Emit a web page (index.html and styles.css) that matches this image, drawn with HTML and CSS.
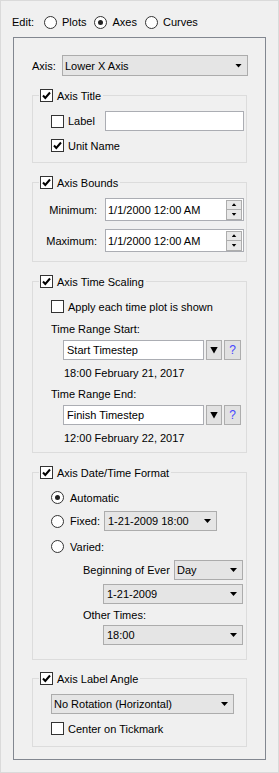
FILE: index.html
```html
<!DOCTYPE html>
<html>
  <head>
    <title>Axis Options</title>
    <link rel="stylesheet" href="styles.css">
  </head>
  <body>
    <div class="edit-row">
      <span class="edit-label">Edit:</span>
      <span class="radio"></span><span class="opt">Plots</span>
      <span class="radio on"></span><span class="opt">Axes</span>
      <span class="radio"></span><span class="opt">Curves</span>
    </div>

    <div class="panel">
      <div class="axis-row">
        <span class="axis-label">Axis:</span>
        <div class="combo axis-combo"><span>Lower X Axis</span><i class="arrow"></i></div>
      </div>

      <!-- Axis Title -->
      <div class="group">
        <div class="group-title">
          <span class="check on"><svg viewBox="0 0 11 11"><path d="M2 5.5 L4.3 8 L9 2.5"/></svg></span>
          Axis Title
        </div>
        <div class="row label-row">
          <span class="check"></span>
          <span class="label-text">Label</span>
          <div class="textbox"></div>
        </div>
        <div class="row unit-row">
          <span class="check on"><svg viewBox="0 0 11 11"><path d="M2 5.5 L4.3 8 L9 2.5"/></svg></span>
          <span class="check-text">Unit Name</span>
        </div>
      </div>

      <!-- Axis Bounds -->
      <div class="group">
        <div class="group-title">
          <span class="check on"><svg viewBox="0 0 11 11"><path d="M2 5.5 L4.3 8 L9 2.5"/></svg></span>
          Axis Bounds
        </div>
        <div class="bound-row min-row">
          <span class="bound-label">Minimum:</span>
          <div class="spin">
            <span>1/1/2000 12:00 AM</span>
            <div class="spin-btns">
              <span class="spin-btn"><i class="tri up"></i></span>
              <span class="spin-btn"><i class="tri"></i></span>
            </div>
          </div>
        </div>
        <div class="bound-row max-row">
          <span class="bound-label">Maximum:</span>
          <div class="spin">
            <span>1/1/2000 12:00 AM</span>
            <div class="spin-btns">
              <span class="spin-btn"><i class="tri up"></i></span>
              <span class="spin-btn"><i class="tri"></i></span>
            </div>
          </div>
        </div>
      </div>

      <!-- Axis Time Scaling -->
      <div class="group">
        <div class="group-title">
          <span class="check on"><svg viewBox="0 0 11 11"><path d="M2 5.5 L4.3 8 L9 2.5"/></svg></span>
          Axis Time Scaling
        </div>
        <div class="row apply-row">
          <span class="check"></span>
          <span class="check-text">Apply each time plot is shown</span>
        </div>
        <div class="row caption-row">Time Range Start:</div>
        <div class="picker-row">
          <div class="edit-combo">Start Timestep</div>
          <span class="drop-btn"><i class="drop-tri"></i></span>
          <span class="help-btn">?</span>
        </div>
        <div class="row date-row">18:00 February 21, 2017</div>
        <div class="row caption-row end-caption">Time Range End:</div>
        <div class="picker-row">
          <div class="edit-combo">Finish Timestep</div>
          <span class="drop-btn"><i class="drop-tri"></i></span>
          <span class="help-btn">?</span>
        </div>
        <div class="row date-row">12:00 February 22, 2017</div>
      </div>

      <!-- Axis Date/Time Format -->
      <div class="group">
        <div class="group-title">
          <span class="check on"><svg viewBox="0 0 11 11"><path d="M2 5.5 L4.3 8 L9 2.5"/></svg></span>
          Axis Date/Time Format
        </div>
        <div class="row auto-row">
          <span class="radio on"></span>
          <span class="radio-text">Automatic</span>
        </div>
        <div class="row fixed-row">
          <span class="radio"></span>
          <span class="radio-text fixed-text">Fixed:</span>
          <div class="combo fixed-combo"><span>1-21-2009 18:00</span><i class="arrow"></i></div>
        </div>
        <div class="row varied-row">
          <span class="radio"></span>
          <span class="radio-text">Varied:</span>
        </div>
        <div class="row begin-row">
          <span class="begin-label">Beginning of Every:</span>
          <div class="combo day-combo"><span>Day</span><i class="arrow"></i></div>
        </div>
        <div class="row sub-combo-row first-sub">
          <div class="combo wide-combo"><span>1-21-2009</span><i class="arrow"></i></div>
        </div>
        <div class="row other-row">Other Times:</div>
        <div class="row sub-combo-row last-sub">
          <div class="combo wide-combo"><span>18:00</span><i class="arrow"></i></div>
        </div>
      </div>

      <!-- Axis Label Angle -->
      <div class="group last-group">
        <div class="group-title">
          <span class="check on"><svg viewBox="0 0 11 11"><path d="M2 5.5 L4.3 8 L9 2.5"/></svg></span>
          Axis Label Angle
        </div>
        <div class="row rotation-row">
          <div class="combo rotation-combo"><span>No Rotation (Horizontal)</span><i class="arrow"></i></div>
        </div>
        <div class="row center-row">
          <span class="check"></span>
          <span class="check-text">Center on Tickmark</span>
        </div>
      </div>
    </div>
  </body>
</html>
```

FILE: styles.css
```css
body {
  margin: 0;
  height: 773px;
  box-sizing: border-box;
  border: 1px solid #dadada;
  background-color: #f0f0f0;
  font-family: "Liberation Sans", Arial, sans-serif;
  font-size: 11px;
  color: #000;
  overflow: hidden;
}

/* top radio strip */
.edit-row {
  display: flex;
  align-items: center;
  height: 14px;
  margin: 14px 0 0 11px;
}

.edit-label {
  margin-right: 10px;
}

.opt {
  margin: 0 8px 0 5px;
}

/* outer frame */
.panel {
  margin: 8px 0 0 12px;
  width: 253px;
  height: 723px;
  box-sizing: border-box;
  border: 1px solid #828790;
  padding: 17px 18px 0 18px;
}

.axis-row {
  display: flex;
  align-items: center;
  height: 21px;
}

.axis-label {
  width: 30px;
  flex: none;
}

/* controls */
.check {
  width: 13px;
  height: 13px;
  box-sizing: border-box;
  border: 1px solid #333;
  background-color: #fff;
  flex: none;
  display: flex;
}

.check svg {
  width: 11px;
  height: 11px;
}

.check path {
  fill: none;
  stroke: #000;
  stroke-width: 2;
}

.radio {
  width: 13px;
  height: 13px;
  box-sizing: border-box;
  border: 1px solid #333;
  border-radius: 50%;
  background-color: #fff;
  flex: none;
  display: flex;
  align-items: center;
  justify-content: center;
}

.radio.on::after {
  content: "";
  width: 5px;
  height: 5px;
  border-radius: 50%;
  background-color: #222;
}

.combo {
  display: flex;
  align-items: center;
  justify-content: space-between;
  height: 20px;
  box-sizing: border-box;
  border: 1px solid #acacac;
  background-color: #e5e5e5;
  padding: 0 5px 0 2px;
  flex: none;
  white-space: nowrap;
}

.arrow {
  width: 7px;
  height: 4px;
  background-color: #000;
  clip-path: polygon(0 0, 100% 0, 50% 100%);
  flex: none;
}

.axis-combo {
  width: 186px;
  height: 21px;
}

.textbox {
  width: 139px;
  height: 20px;
  box-sizing: border-box;
  border: 1px solid #abadb3;
  background-color: #fff;
  flex: none;
}

/* group boxes */
.group {
  display: flex;
  flex-direction: column;
  margin-top: 19px;
  border: 1px solid #dcdcdc;
}

.panel .group:first-of-type {
  margin-top: 18px;
}

.group.last-group {
  margin-top: 18px;
}

.group-title {
  align-self: flex-start;
  display: flex;
  align-items: center;
  gap: 4px;
  height: 13px;
  margin: -7px 0 0 6px;
  padding: 0 2px 0 1px;
  background-color: #f0f0f0;
}

.row {
  display: flex;
  align-items: center;
  height: 13px;
  padding-left: 18px;
  white-space: nowrap;
}

.check-text {
  margin-left: 4px;
}

.radio-text {
  margin-left: 6px;
}

/* Axis Title */
.label-row {
  height: 20px;
  margin-top: 9px;
}

.label-text {
  width: 37px;
  margin-left: 4px;
}

.unit-row {
  margin-top: 8px;
  margin-bottom: 10px;
}

/* Axis Bounds */
.bound-row {
  display: flex;
  align-items: center;
}

.min-row {
  margin-top: 9px;
}

.max-row {
  margin-top: 8px;
  margin-bottom: 9px;
}

.bound-label {
  width: 64px;
  margin-right: 8px;
  text-align: right;
}

.spin {
  display: flex;
  align-items: center;
  width: 139px;
  height: 23px;
  box-sizing: border-box;
  border: 1px solid #abadb3;
  background-color: #fff;
  padding: 0 1px 0 2px;
}

.spin-btns {
  margin-left: auto;
  display: flex;
  flex-direction: column;
  width: 16px;
  height: 20px;
}

.spin-btn {
  flex: 1;
  display: flex;
  align-items: center;
  justify-content: center;
  border: 1px solid #adadad;
  background-color: #e8e8e8;
}

.spin-btn + .spin-btn {
  border-top: none;
}

.tri {
  width: 5px;
  height: 3px;
  background-color: #000;
  clip-path: polygon(0 0, 100% 0, 50% 100%);
}

.tri.up {
  clip-path: polygon(50% 0, 100% 100%, 0 100%);
}

/* Axis Time Scaling */
.apply-row {
  margin-top: 12px;
}

.caption-row {
  margin-top: 9px;
}

.caption-row.end-caption {
  margin-top: 8px;
}

.picker-row {
  display: flex;
  align-items: center;
  height: 20px;
  margin-top: 5px;
  padding-left: 30px;
}

.edit-combo {
  display: flex;
  align-items: center;
  width: 141px;
  height: 20px;
  box-sizing: border-box;
  border: 1px solid #abadb3;
  background-color: #fff;
  padding-left: 3px;
}

.drop-btn,
.help-btn {
  display: flex;
  align-items: center;
  justify-content: center;
  height: 20px;
  box-sizing: border-box;
  border: 1px solid #adadad;
  background-color: #e1e1e1;
  margin-left: 2px;
}

.drop-btn {
  width: 16px;
}

.drop-tri {
  width: 8px;
  height: 7px;
  background-color: #000;
  clip-path: polygon(0 0, 100% 0, 50% 100%);
}

.help-btn {
  width: 17px;
  color: #4646ff;
  font-size: 12px;
}

.date-row {
  margin-top: 6px;
  padding-left: 31px;
}

.date-row:last-child {
  margin-bottom: 8px;
}

/* Axis Date/Time Format */
.auto-row {
  margin-top: 12px;
}

.fixed-row {
  height: 20px;
  margin-top: 7px;
}

.fixed-text {
  width: 34px;
}

.fixed-combo {
  width: 113px;
  padding-left: 3px;
}

.varied-row {
  margin-top: 9px;
}

.begin-row {
  height: 20px;
  margin-top: 7px;
  padding-left: 50px;
}

.begin-label {
  width: 87px;
  overflow: hidden;
  flex: none;
}

.day-combo {
  width: 69px;
  margin-left: 4px;
}

.sub-combo-row {
  height: 20px;
  padding-left: 70px;
}

.first-sub {
  margin-top: 4px;
}

.last-sub {
  margin-top: 4px;
  margin-bottom: 14px;
}

.wide-combo {
  width: 140px;
  padding-left: 3px;
}

.other-row {
  margin-top: 4px;
  padding-left: 50px;
}

/* Axis Label Angle */
.rotation-row {
  height: 20px;
  margin-top: 9px;
}

.rotation-combo {
  width: 183px;
}

.center-row {
  margin-top: 8px;
  margin-bottom: 11px;
}
```
